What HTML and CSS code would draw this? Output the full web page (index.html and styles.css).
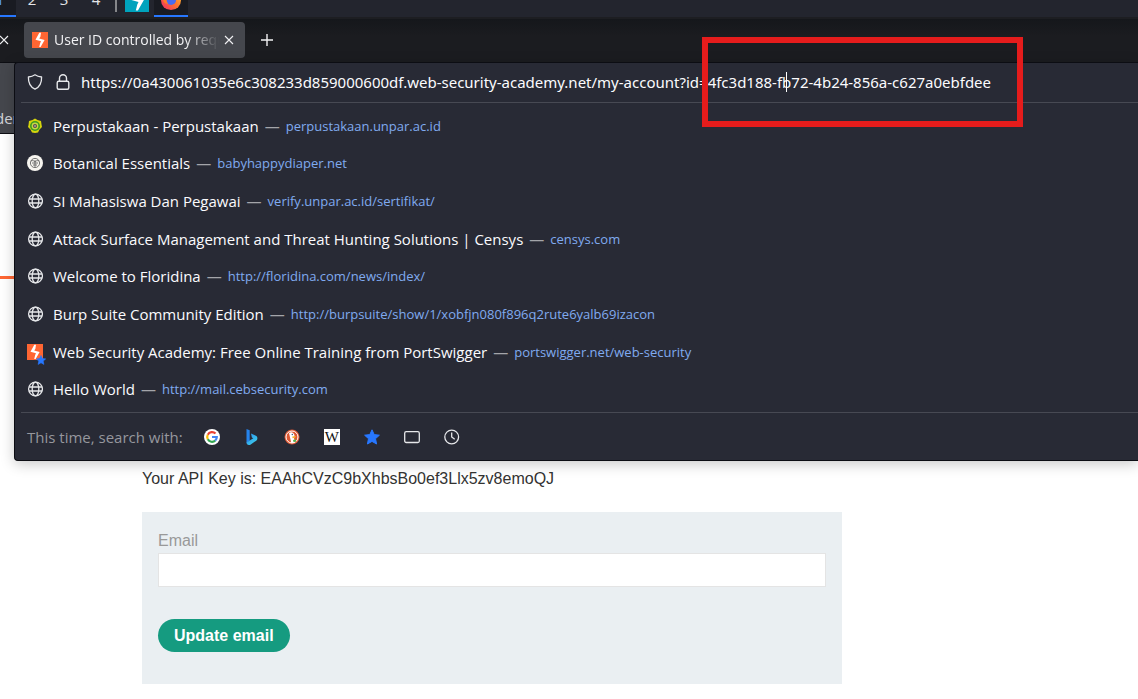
FILE: index.html
```html
<!DOCTYPE html>
<html lang="en">
<head>
<meta charset="utf-8">
<title>User ID controlled by request parameter</title>
<link rel="stylesheet" href="styles.css">
</head>
<body>
<svg class="defs" aria-hidden="true">
  <symbol id="burp" viewBox="0 0 16 16"><path d="M7.300.8H9L8.400 4.800 7.200 6.500l5.400 1.500-4 7H7.200l1-4 .8-1.700-5.500-1.500z"/></symbol>
  <symbol id="globe" viewBox="0 0 16 16"><g fill="none" stroke="currentColor" stroke-width="1.300"><circle cx="8.500" cy="8" r="6.900"/><ellipse cx="8.500" cy="8" rx="3.300" ry="6.900"/><path d="M2 6h13M2 10h13"/></g></symbol>
  <symbol id="star" viewBox="0 0 16 16"><path stroke="currentColor" stroke-width="1" stroke-linejoin="round" fill="currentColor" d="m8 .8 2.200 4.800 5.200.6-3.900 3.500 1.100 5.300L8 12.400 3.400 15l1.100-5.300L.6 6.200l5.200-.6z"/></symbol>
  <symbol id="cross" viewBox="0 0 10 10"><path fill="none" stroke="currentColor" stroke-width="1.100" d="m1 1 8 8M9 1 1 9"/></symbol>
</svg>

<header class="panel">
  <button class="workspace current first">1</button>
  <button class="workspace">2</button>
  <button class="workspace">3</button>
  <button class="workspace">4</button>
  <span class="panel-divider"></span>
  <button class="app" aria-label="Burp Suite"><svg class="app-burp" viewBox="0 0 16 16"><use href="#burp"/></svg></button>
  <button class="app current" aria-label="Firefox"><svg class="app-firefox" viewBox="0 0 24 24">
    <defs><linearGradient id="fox" x1="1" y1="0" x2="0" y2="1"><stop offset="0" stop-color="#ffd43a"/><stop offset=".45" stop-color="#ff7a2a"/><stop offset="1" stop-color="#f0286a"/></linearGradient></defs>
    <circle cx="12" cy="12" r="11" fill="url(#fox)"/><circle cx="12" cy="12" r="5.500" fill="#4a6cf0"/><path fill="#ff7a2a" d="M3 9c3-2 5-1 5 1-1 1-1 4 1 6-4 1-6-2-6-7z"/></svg></button>
</header>

<nav class="tabs">
  <button class="tab-previous" aria-label="Close previous tab"><svg><use href="#cross"/></svg></button>
  <div class="tab">
    <svg class="favicon burp" viewBox="0 0 16 16"><use href="#burp"/></svg>
    <span class="tab-title">User ID controlled by request parameter</span>
    <button class="tab-close" aria-label="Close tab"><svg><use href="#cross"/></svg></button>
  </div>
  <button class="tab-new" aria-label="New tab"><svg viewBox="0 0 12 12"><path d="M6 0v12M0 6h12"/></svg></button>
</nav>

<div class="browser">
  <div class="toolbar"><span class="bookmark">der</span></div>

  <section class="urlbar">
    <div class="address">
      <svg class="icon" viewBox="0 0 16 16"><path fill="none" stroke="currentColor" stroke-width="1.300" stroke-linejoin="round" d="M8 .8c2 1.400 4.200 2 6.600 2.200C14.800 9 12.700 13 8 15.200 3.300 13 1.200 9 1.400 3 3.800 2.800 6 2.200 8 .8z"/></svg>
      <svg class="icon" viewBox="0 0 16 16"><g fill="none" stroke="currentColor" stroke-width="1.400"><rect x="2.200" y="7.200" width="11.600" height="8" rx="1.500"/><path d="M4.500 7V4.300a3.500 3.500 0 0 1 7 0V7"/></g></svg>
      <input class="url" type="text" aria-label="Address" value="https://0a430061035e6c308233d859000600df.web-security-academy.net/my-account?id=4fc3d188-fb72-4b24-856a-c627a0ebfdee">
      <span class="caret"></span>
    </div>
    <ul class="results">
      <li><svg class="icon" viewBox="0 0 16 16"><path fill="#d5d40d" d="M8 .5 10.500 2l3.500 1 .6 4 .4 2-2.500 2.500L11 14.500 8 15l-3-.5-1.500-3L1 9l.5-2L2 3l3.500-1z"/><circle cx="8" cy="8" r="5" fill="#399b1f"/><circle cx="8" cy="8" r="3.400" fill="#c6d844"/><circle cx="8" cy="8" r="2" fill="#5b4a4a"/><circle cx="8" cy="8" r=".8" fill="#ddd"/></svg><span class="title">Perpustakaan - Perpustakaan</span><span class="dash">—</span><a href="#">perpustakaan.unpar.ac.id</a></li>
      <li><svg class="icon" viewBox="0 0 16 16"><circle cx="8" cy="8" r="8" fill="#f7f5f0"/><g fill="none" stroke="#555" stroke-width=".8"><circle cx="8" cy="8" r="4.600"/><path d="M4 6c2-1 3 0 4 1 1-1 2-2 4-1M5 8h6M6 10h4M8 5v7"/></g></svg><span class="title">Botanical Essentials</span><span class="dash">—</span><a href="#">babyhappydiaper.net</a></li>
      <li><svg class="icon"><use href="#globe"/></svg><span class="title">SI Mahasiswa Dan Pegawai</span><span class="dash">—</span><a href="#">verify.unpar.ac.id/sertifikat/</a></li>
      <li><svg class="icon"><use href="#globe"/></svg><span class="title">Attack Surface Management and Threat Hunting Solutions | Censys</span><span class="dash">—</span><a href="#">censys.com</a></li>
      <li><svg class="icon"><use href="#globe"/></svg><span class="title">Welcome to Floridina</span><span class="dash">—</span><a href="#">http://floridina.com/news/index/</a></li>
      <li><svg class="icon"><use href="#globe"/></svg><span class="title">Burp Suite Community Edition</span><span class="dash">—</span><a href="#">http://burpsuite/show/1/xobfjn080f896q2rute6yalb69izacon</a></li>
      <li><span class="starred"><svg class="favicon burp" viewBox="0 0 16 16"><use href="#burp"/></svg><svg class="badge" viewBox="0 0 16 16"><use href="#star"/></svg></span><span class="title">Web Security Academy: Free Online Training from PortSwigger</span><span class="dash">—</span><a href="#">portswigger.net/web-security</a></li>
      <li><svg class="icon"><use href="#globe"/></svg><span class="title">Hello World</span><span class="dash">—</span><a href="#">http://mail.cebsecurity.com</a></li>
    </ul>
    <footer class="engines">
      <span class="engines-label">This time, search with:</span>
      <button aria-label="Google"><svg viewBox="0 0 16 16"><circle cx="8" cy="8" r="8" fill="#fff"/><g fill="none" stroke-width="2.200"><path stroke="#ea4335" d="M3.800 5.700a4.800 4.800 0 0 1 7.700-1.100"/><path stroke="#fbbc05" d="M3.800 10.300a4.800 4.800 0 0 1 0-4.600"/><path stroke="#34a853" d="M11.200 11.600a4.800 4.800 0 0 1-7.400-1.300"/><path stroke="#4285f4" d="M8 8h4.800a4.800 4.800 0 0 1-1.600 3.600"/></g></svg></button>
      <button aria-label="Bing"><svg viewBox="0 0 16 16"><defs><linearGradient id="bing" x2="1" y2="1"><stop offset="0" stop-color="#2b8cf0"/><stop offset="1" stop-color="#3fd6e8"/></linearGradient></defs><path fill="#2583ec" d="m2.500 0 3.200 1.200v10.600L2.500 14z"/><path fill="url(#bing)" d="m7 4.500 5 2.300c1.600 1 1.900 3.300.5 4.700L6 16c-1.800.3-3.500-.7-3.500-2.500L9.300 9.300 7.900 8.600z"/></svg></button>
      <button aria-label="DuckDuckGo"><svg viewBox="0 0 16 16"><circle cx="8" cy="8" r="7.500" fill="#de5833"/><circle cx="8" cy="8" r="6" fill="none" stroke="#fff" stroke-width="1"/><path fill="#fff" d="M5 4c2-1.800 5.300-.6 5.500 2.500L10 9l1 4.500-3.700.5z"/><path fill="#f7b52c" d="M8.300 7.500 12 7l-1 1.800-2.500.4z"/><path fill="#55ad48" d="m9 11 3-.8v2.500L9.500 13z"/><circle cx="8.300" cy="5.500" r=".7" fill="#31537b"/></svg></button>
      <button class="wiki" aria-label="Wikipedia"><span>W</span></button>
      <button class="blue" aria-label="Bookmarks"><svg viewBox="0 0 16 16"><use href="#star"/></svg></button>
      <button aria-label="Tabs"><svg viewBox="0 0 16 16"><rect x=".7" y="2.700" width="14.600" height="10.800" rx="1.500" fill="none" stroke="currentColor" stroke-width="1.300"/></svg></button>
      <button aria-label="History"><svg viewBox="0 0 16 16"><g fill="none" stroke="currentColor" stroke-width="1.300"><circle cx="7.700" cy="8" r="6.900"/><path d="M7.700 3.500V8l3 2.200"/></g></svg></button>
    </footer>
  </section>
</div>

<main class="page">
  <hr class="accent">
  <div class="account">
    <p class="key">Your API Key is: EAAhCVzC9bXhbsBo0ef3Llx5zv8emoQJ</p>
    <form class="login">
      <label for="email">Email</label>
      <input id="email" type="email">
      <button type="button">Update email</button>
    </form>
  </div>
</main>
<div class="highlight"></div>
</body>
</html>
```
FILE: styles.css
```css
* { box-sizing: border-box; }
body { margin: 0; position: relative; background: #fff; overflow-x: hidden; font: 15px/20px "Open Sans", "Noto Sans", sans-serif; }
button { border: 0; padding: 0; background: none; color: inherit; font: inherit; }
svg { display: block; flex: none; }
.defs { position: absolute; width: 0; height: 0; }

.panel { display: flex; align-items: flex-end; height: 19px; overflow: hidden; background: #23252e; border-bottom: 2px solid #1d1e22; color: #e4e5e8; }
.workspace { flex: none; width: 32px; height: 34px; padding-bottom: 2px; }
.workspace.first { margin-left: -16px; }
.current { background: #191b22; border-bottom: 2px solid #2777ff; }
.workspace.current { padding-bottom: 0; color: #5b9bff; }
.panel-divider { width: 2px; height: 28px; margin: 0 3px 5px; background: #85868a; }
.app { display: grid; place-items: center; width: 34px; height: 34px; flex: none; }
.app-burp { width: 24px; height: 24px; background: #00a3bd; fill: #fff; }
.app.current { padding-top: 2px; }
.app-firefox { width: 22px; height: 22px; }

.tabs { display: flex; align-items: center; height: 43px; padding-bottom: 1px; background: linear-gradient(#15171b, #1b1c20 40%); color: #f2f2f4; }
.tab-previous { width: 25px; margin-left: -1px; }
.tabs button svg { width: 10px; height: 10px; }
.tab { display: flex; align-items: center; width: 221px; height: 36px; padding: 0 6px 0 8px; border-radius: 4px; background: #45474d; }
.favicon { width: 16px; height: 16px; }
.burp { background: #ff6633; fill: #fff; }
.tab-title { flex: 1; min-width: 0; margin-left: 6px; overflow: hidden; white-space: nowrap; font-size: 14px; -webkit-mask-image: linear-gradient(to right, #000 80%, transparent); mask-image: linear-gradient(to right, #000 80%, transparent); }
.tab-close { display: grid; place-items: center; width: 20px; height: 20px; }
.tabs .tab-new { display: grid; place-items: center; width: 44px; height: 36px; }
.tabs .tab-new svg { width: 12px; height: 12px; stroke: currentColor; stroke-width: 1.4; }

.browser { position: relative; }
.toolbar { display: flex; align-items: flex-end; height: 72px; padding-bottom: 5px; overflow: hidden; background: #45474d; border-top: 1px solid #0d0e13; border-bottom: 1px solid #0d0e13; color: #d5d6da; }
.bookmark { margin-left: -5px; }

.urlbar { position: absolute; top: 0; left: 14px; right: 0; padding-left: 6px; background: #282a35; border: 1px solid #0c0d13; border-right: 0; border-radius: 4px 0 0 4px; box-shadow: 0 3px 14px rgba(0, 0, 0, .22); color: #fbfbfe; }
.icon { width: 16px; height: 16px; color: #e6e7ea; }
.address { position: relative; display: flex; align-items: center; gap: 12px; height: 40px; padding: 0 0 1px 6px; border-bottom: 1px solid #474953; }
.url { flex: 1; min-width: 0; margin-left: -2px; padding: 0; border: 0; outline: 0; background: none; color: inherit; font: 15px/20px "Noto Sans", sans-serif; }
.caret { position: absolute; left: 765px; top: 9px; width: 1px; height: 20px; background: #fff; }
.results { display: grid; grid-auto-rows: 1fr; height: 301px; margin: 4px 0; padding: 0 0 0 6px; list-style: none; }
.results li { display: flex; align-items: center; white-space: nowrap; }
.title { margin-left: 10px; }
.dash { margin: 0 6px; color: #a4a5aa; }
.results a { color: #80aaf0; font-size: 13px; text-decoration: none; }
.starred { position: relative; }
.badge { position: absolute; left: 9px; top: 11px; width: 10px; height: 10px; color: #2777ff; }
.engines { display: flex; align-items: center; height: 48px; padding-left: 6px; border-top: 1px solid #474953; color: #e6e7ea; }
.engines-label { margin-right: 9px; color: #96979d; }
.engines button { display: grid; place-items: center; width: 40px; height: 32px; }
.engines svg { width: 16px; height: 16px; }
.engines .blue { color: #2777ff; }
.wiki span { width: 16px; height: 16px; background: #fff; color: #111; font: 15px/17px "Liberation Serif", serif; }

.page { color: #333332; font: 16px/20px "Liberation Sans", Arial, sans-serif; }
.accent { height: 3px; margin: 142px 0 0; border: 0; background: #ff6633; }
.account { max-width: 842px; padding-left: 142px; }
.key { margin: 0; padding: 190px 0 23px; }
.login { display: flex; flex-direction: column; align-items: flex-start; padding: 19px 16px 32px; background: #eaeff2; }
.login label { color: #999; }
.login input { width: 100%; height: 34px; margin: 2px 0 32px; border: 1px solid #e4e4e4; background: #fff; font: inherit; }
.login button { height: 33px; padding: 0 16px; border-radius: 17px; background: #159b80; color: #fff; font-weight: 700; }
.highlight { position: absolute; left: 702px; top: 37px; width: 321px; height: 90px; border: 6px solid #e51c1c; pointer-events: none; }
```
